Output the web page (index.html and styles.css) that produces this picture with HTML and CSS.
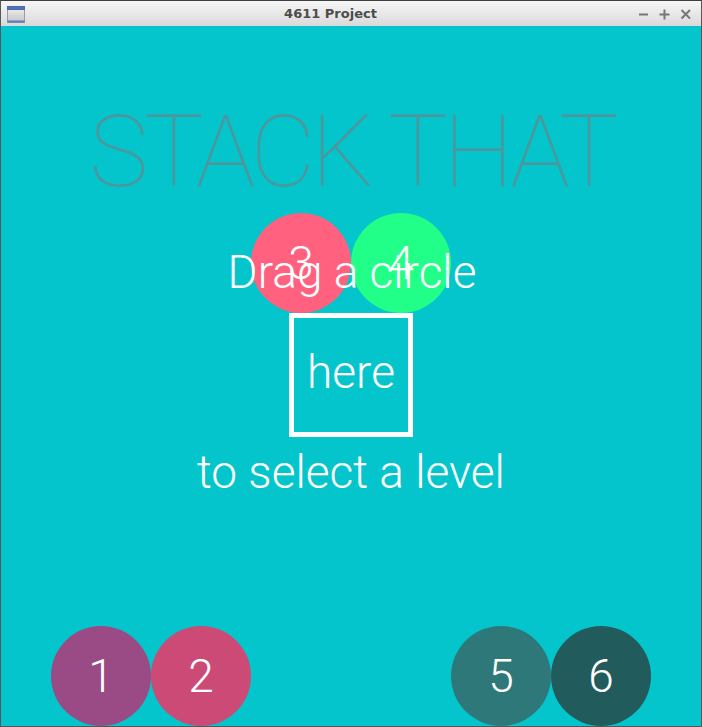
FILE: index.html
```html
<!DOCTYPE html>
<html>
<head>
<meta charset="utf-8">
<title>4611 Project</title>
<link rel="stylesheet" href="styles.css">
</head>
<body>
<div class="window">
  <div class="titlebar">
    <svg class="app-icon" width="18" height="17" viewBox="0 0 18 17">
      <defs>
        <linearGradient id="ig" x1="0" y1="0" x2="0" y2="1">
          <stop offset="0" stop-color="#f2f2f2"/>
          <stop offset="1" stop-color="#c4c4c4"/>
        </linearGradient>
      </defs>
      <rect x="0.5" y="0.5" width="17" height="16" fill="url(#ig)" stroke="#9a9aa6"/>
      <rect x="0.5" y="0.5" width="17" height="3" fill="#4f74b8" stroke="#4a6aa8"/>
      <rect x="0.5" y="14.5" width="17" height="2" fill="#5a7cc0"/>
    </svg>
    <div class="title">4611 Project</div>
    <div class="controls">
      <svg width="12" height="12" viewBox="0 0 12 12"><path d="M1 6.5H10" stroke="#777" stroke-width="2"/></svg>
      <svg width="12" height="12" viewBox="0 0 12 12"><path d="M0.5 6.5H10.5M5.5 1.5V11.5" stroke="#777" stroke-width="2"/></svg>
      <svg width="12" height="12" viewBox="0 0 12 12"><path d="M1.5 2L10 10.5M10 2L1.5 10.5" stroke="#777" stroke-width="2"/></svg>
    </div>
  </div>
  <div class="canvas">
    <div class="circle c3" style="left:250px; top:186.5px;">3</div>
    <div class="circle c4" style="left:350px; top:186.5px;">4</div>
    <div class="circle c1" style="left:50px; top:600px;">1</div>
    <div class="circle c2" style="left:150px; top:600px;">2</div>
    <div class="circle c5" style="left:450px; top:600px;">5</div>
    <div class="circle c6" style="left:550px; top:600px;">6</div>
    <div class="stack">
      <div class="game-title">STACK THAT</div>
      <div class="line prompt">Drag a circle</div>
      <div class="dropzone"><span class="line">here</span></div>
      <div class="line hint">to select a level</div>
    </div>
  </div>
</div>
</body>
</html>
```

FILE: styles.css
```css
html, body {
  margin: 0;
  padding: 0;
  background: #05c5cc;
}
.window {
  width: 702px;
  height: 727px;
  box-sizing: border-box;
  border: 1px solid #565656;
  border-top-color: #3e3e3e;
  display: flex;
  flex-direction: column;
  overflow: hidden;
}
.titlebar {
  height: 25px;
  flex: none;
  display: flex;
  align-items: center;
  background: linear-gradient(#f6f6f6, #e8e8e8 50%, #d9d9d9);
}
.app-icon {
  margin-left: 6px;
  margin-top: 1px;
  flex: none;
}
.title {
  flex: 1;
  text-align: center;
  font-family: "DejaVu Sans", sans-serif;
  font-weight: bold;
  font-size: 13px;
  color: #4c4c4c;
  padding-right: 2px;
}
.controls {
  display: flex;
  gap: 9px;
  margin-right: 9px;
  align-items: center;
}
.controls svg { display: block; }
.canvas {
  position: relative;
  width: 700px;
  height: 700px;
  background: #05c5cc;
  font-family: Roboto, "Liberation Sans", sans-serif;
  color: #ffffff;
  overflow: hidden;
}
.circle {
  position: absolute;
  width: 100px;
  height: 100px;
  border-radius: 50%;
  display: flex;
  align-items: center;
  justify-content: center;
  font-size: 46px;
  line-height: 46px;
  font-weight: 300;
}
.c1 { background: #9a4a84; }
.c2 { background: #cc4a76; }
.c3 { background: #ff617f; }
.c4 { background: #22ff88; }
.c5 { background: #2f7879; }
.c6 { background: #225b5b; }
.stack {
  position: relative;
  z-index: 1;
  display: flex;
  flex-direction: column;
  align-items: center;
}
.game-title {
  margin-top: 76px;
  font-size: 100px;
  line-height: 100px;
  font-weight: 100;
  letter-spacing: -4.3px;
  color: #4a989d;
  margin-left: 2px;
  white-space: nowrap;
}
.line {
  font-size: 46px;
  line-height: 46px;
  font-weight: 300;
  white-space: nowrap;
}
.prompt {
  margin-top: 47px;
  margin-left: 2px;
}
.dropzone {
  margin-top: 18px;
  width: 124px;
  height: 124px;
  box-sizing: border-box;
  border: 5px solid #ffffff;
  display: flex;
  align-items: center;
  justify-content: center;
  padding-bottom: 6px;
}
.hint {
  margin-top: 12px;
}
```
